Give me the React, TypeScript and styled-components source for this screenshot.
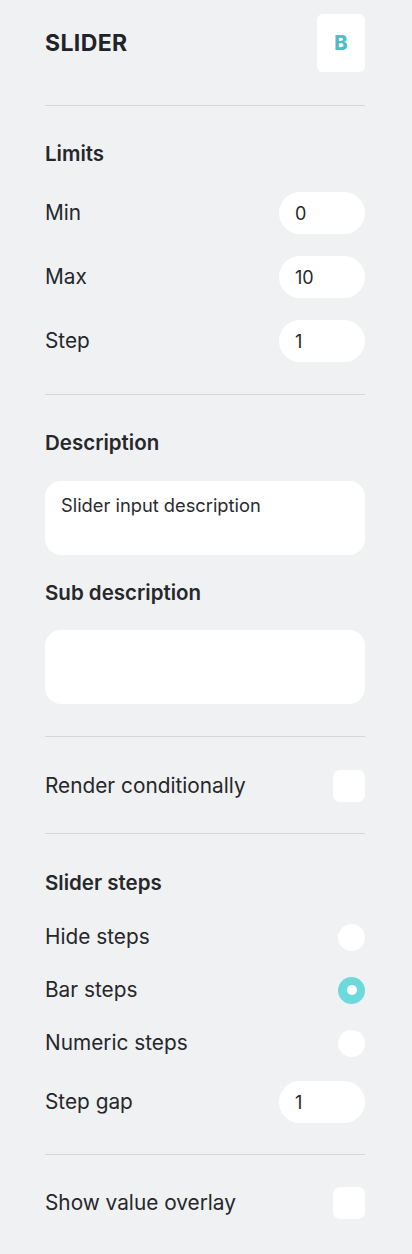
import React from "react";
import styled, { createGlobalStyle } from "styled-components";

const Global = createGlobalStyle`
  html, body { margin: 0; padding: 0; background: #f0f1f3; }
  body { font-family: Inter, "Noto Sans", sans-serif; color: #26272b; }
  * { box-sizing: border-box; }
`;

const Panel = styled.div`
  width: 412px;
  min-height: 1254px;
  padding: 14px 47px 0 45px;
  background: #f0f1f3;
  display: flex;
  flex-direction: column;
`;

const Header = styled.div`
  display: flex;
  align-items: center;
  justify-content: space-between;
  padding-bottom: 33px;
`;

const Title = styled.h1`
  margin: 0;
  font-size: 23px;
  line-height: 28px;
  font-weight: 700;
  letter-spacing: 0.4px;
  color: #222327;
`;

const BadgeButton = styled.button`
  width: 48px;
  height: 58px;
  border: none;
  border-radius: 6px;
  background: #ffffff;
  color: #4fbcc6;
  font-family: Inter, sans-serif;
  font-weight: 800;
  font-size: 20px;
  padding: 0;
  display: flex;
  align-items: center;
  justify-content: center;
`;

const Divider = styled.hr`
  margin: 0;
  border: none;
  height: 1px;
  background: #d6d7db;
`;

const Section = styled.section<{ $top?: number; $bottom?: number }>`
  display: flex;
  flex-direction: column;
  padding-top: ${(p) => p.$top ?? 35}px;
  padding-bottom: ${(p) => p.$bottom ?? 33}px;
`;

const SectionTitle = styled.h2<{ $gap?: number }>`
  margin: 0 0 ${(p) => p.$gap ?? 26}px 0;
  font-size: 20.5px;
  line-height: 24px;
  font-weight: 600;
  color: #26272b;
`;

const Rows = styled.div<{ $gap: number }>`
  display: flex;
  flex-direction: column;
  gap: ${(p) => p.$gap}px;
`;

const Row = styled.div<{ $h: number }>`
  display: flex;
  align-items: center;
  justify-content: space-between;
  height: ${(p) => p.$h}px;
`;

const Label = styled.span`
  font-size: 20.8px;
  line-height: 24px;
  font-weight: 400;
  color: #26272b;
`;

const NumberInput = styled.div`
  width: 86px;
  height: 42px;
  border-radius: 21px;
  background: #ffffff;
  display: flex;
  align-items: center;
  padding-left: 16px;
  font-size: 18px;
  color: #26272b;
`;

const TextArea = styled.div<{ $gap?: number }>`
  height: 74px;
  border-radius: 16px;
  background: #ffffff;
  padding: 13px 16px;
  font-size: 18.3px;
  line-height: 22px;
  color: #2a2b2f;
  margin-bottom: ${(p) => p.$gap ?? 0}px;
`;

const Checkbox = styled.div`
  width: 32px;
  height: 32px;
  border-radius: 7px;
  background: #ffffff;
`;

const Radio = styled.div<{ $on?: boolean }>`
  width: 27px;
  height: 27px;
  border-radius: 50%;
  background: ${(p) => (p.$on ? "#6cdadc" : "#ffffff")};
  display: flex;
  align-items: center;
  justify-content: center;
  &::after {
    content: "";
    display: ${(p) => (p.$on ? "block" : "none")};
    width: 10px;
    height: 10px;
    border-radius: 50%;
    background: #ffffff;
  }
`;

const StepsBlock = styled.div`
  display: flex;
  flex-direction: column;
  gap: 24px;
`;

export default function App() {
  const limits = [
    { label: "Min", value: "0" },
    { label: "Max", value: "10" },
    { label: "Step", value: "1" },
  ];
  const steps = [
    { label: "Hide steps", on: false },
    { label: "Bar steps", on: true },
    { label: "Numeric steps", on: false },
  ];
  return (
    <>
      <Global />
      <Panel>
        <Header>
          <Title>SLIDER</Title>
          <BadgeButton>B</BadgeButton>
        </Header>
        <Divider />
        <Section $top={36} $bottom={32}>
          <SectionTitle>Limits</SectionTitle>
          <Rows $gap={22}>
            {limits.map((l) => (
              <Row $h={42} key={l.label}>
                <Label>{l.label}</Label>
                <NumberInput>{l.value}</NumberInput>
              </Row>
            ))}
          </Rows>
        </Section>
        <Divider />
        <Section $top={36} $bottom={32}>
          <SectionTitle>Description</SectionTitle>
          <TextArea $gap={26}>Slider input description</TextArea>
          <SectionTitle $gap={25}>Sub description</SectionTitle>
          <TextArea />
        </Section>
        <Divider />
        <Section $top={33} $bottom={31}>
          <Row $h={32}>
            <Label>Render conditionally</Label>
            <Checkbox />
          </Row>
        </Section>
        <Divider />
        <Section $top={37} $bottom={31}>
          <SectionTitle $gap={28}>Slider steps</SectionTitle>
          <StepsBlock>
            <Rows $gap={25}>
              {steps.map((s) => (
                <Row $h={28} key={s.label}>
                  <Label>{s.label}</Label>
                  <Radio $on={s.on} />
                </Row>
              ))}
            </Rows>
            <Row $h={42}>
              <Label>Step gap</Label>
              <NumberInput>1</NumberInput>
            </Row>
          </StepsBlock>
        </Section>
        <Divider />
        <Section $top={32} $bottom={32}>
          <Row $h={32}>
            <Label>Show value overlay</Label>
            <Checkbox />
          </Row>
        </Section>
      </Panel>
    </>
  );
}
